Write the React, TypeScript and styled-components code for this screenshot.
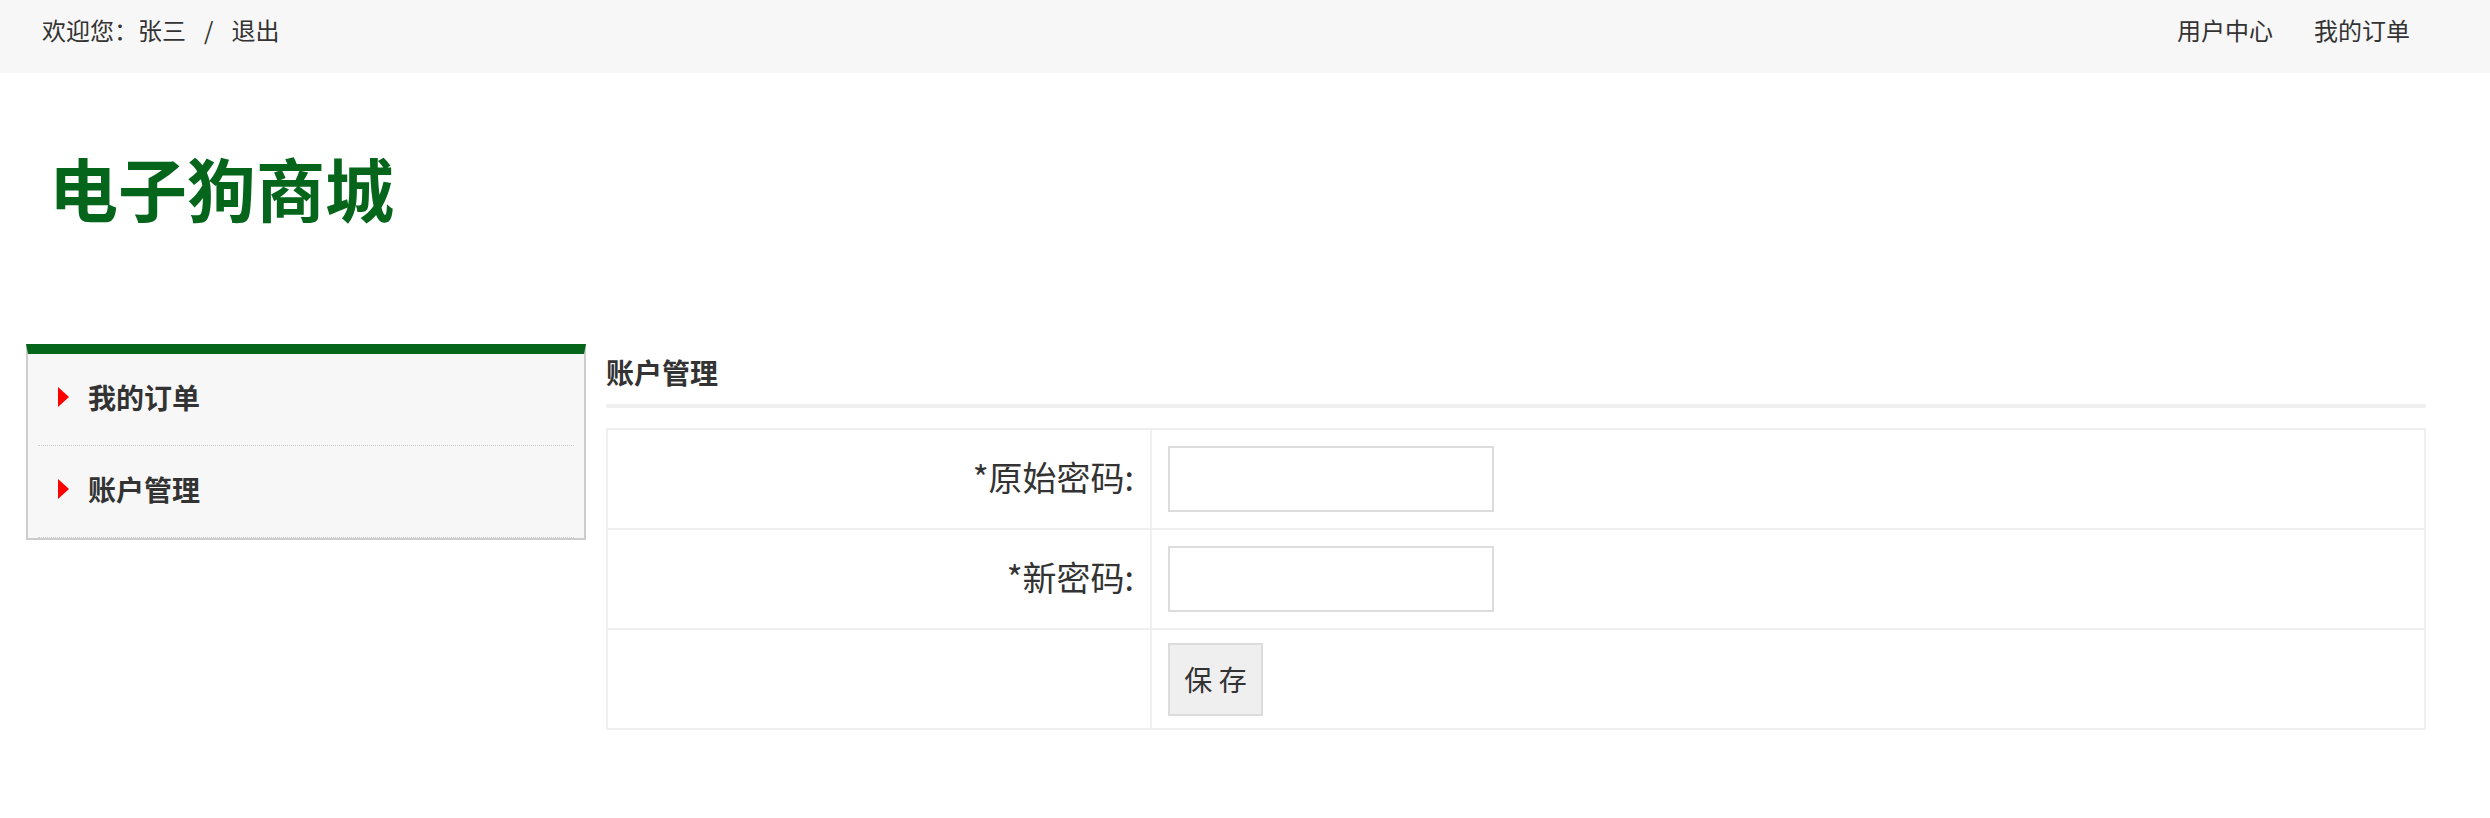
import React from "react";
import styled, { createGlobalStyle } from "styled-components";

const GlobalStyle = createGlobalStyle`
  html, body {
    margin: 0;
    padding: 0;
    background: #ffffff;
  }
  body {
    font-family: "Noto Sans CJK SC", "Noto Sans", sans-serif;
    color: #333333;
  }
  * {
    box-sizing: border-box;
  }
`;

const GREEN = "#05651b";

const TopBar = styled.div`
  display: flex;
  justify-content: space-between;
  align-items: flex-start;
  height: 73px;
  padding: 10px 80px 0 42px;
  background: #f7f7f7;
  font-size: 24px;
  line-height: 40px;
  color: #333333;
`;

const Welcome = styled.div`
  display: flex;
  white-space: pre;
`;

const Link = styled.a`
  color: #333333;
  text-decoration: none;
  cursor: pointer;
`;

const Sep = styled.span`
  margin: 0 18px;
`;

const NavLinks = styled.nav`
  display: flex;
  gap: 41px;
`;

const Header = styled.header`
  padding: 64px 0 0 49px;
`;

const Logo = styled.h1`
  margin: 0;
  font-size: 69px;
  line-height: 101px;
  font-weight: bold;
  color: ${GREEN};
`;

const Body = styled.div`
  display: flex;
  align-items: flex-start;
  gap: 20px;
  margin-top: 106px;
  padding-left: 26px;
`;

const Sidebar = styled.aside`
  width: 560px;
  border: 2px solid #cccccc;
  border-top: 10px solid ${GREEN};
  background: #f7f7f7;
  padding: 0 10px;
`;

const MenuItem = styled.div`
  display: flex;
  align-items: center;
  gap: 19px;
  height: 92px;
  padding: 0 0 6px 20px;
  border-bottom: 1px dotted #cfcfcf;
  font-size: 28px;
  font-weight: bold;
  color: #333333;
  cursor: pointer;
`;

const Arrow = styled.span`
  display: block;
  width: 0;
  height: 0;
  border-left: 11px solid #ff0000;
  border-top: 10px solid transparent;
  border-bottom: 10px solid transparent;
`;

const Main = styled.main`
  width: 1820px;
`;

const Heading = styled.h2`
  margin: 0;
  padding: 8px 0 12px;
  font-size: 28px;
  line-height: 40px;
  font-weight: bold;
  color: #333333;
  border-bottom: 4px solid #f0f0f0;
`;

const FormGrid = styled.form`
  margin: 20px 0 0;
  display: grid;
  grid-template-columns: 544px 1fr;
  border-top: 2px solid #efefef;
  border-left: 2px solid #efefef;
`;

const Cell = styled.div<{ $label?: boolean }>`
  display: flex;
  align-items: center;
  justify-content: ${(p) => (p.$label ? "flex-end" : "flex-start")};
  height: 100px;
  padding: ${(p) => (p.$label ? "0 16px 6px" : "0 16px")};
  border-right: 2px solid #efefef;
  border-bottom: 2px solid #efefef;
  font-size: 34px;
  color: #333333;
`;

const Input = styled.input`
  width: 326px;
  height: 66px;
  border: 2px solid #dcdcdc;
  background: #ffffff;
  outline: none;
  font-size: 24px;
  padding: 0 8px;
`;

const SaveButton = styled.button`
  width: 95px;
  height: 73px;
  padding: 0;
  border: 2px solid #dcdcdc;
  background: #efefef;
  font-family: inherit;
  font-size: 28px;
  color: #333333;
  cursor: pointer;
`;

export default function App() {
  return (
    <>
      <GlobalStyle />
      <TopBar>
        <Welcome>
          <span>欢迎您：</span>
          <Link>张三</Link>
          <Sep>/</Sep>
          <Link>退出</Link>
        </Welcome>
        <NavLinks>
          <Link>用户中心</Link>
          <Link>我的订单</Link>
        </NavLinks>
      </TopBar>
      <Header>
        <Logo>电子狗商城</Logo>
      </Header>
      <Body>
        <Sidebar>
          <MenuItem>
            <Arrow />
            <span>我的订单</span>
          </MenuItem>
          <MenuItem>
            <Arrow />
            <span>账户管理</span>
          </MenuItem>
        </Sidebar>
        <Main>
          <Heading>账户管理</Heading>
          <FormGrid onSubmit={(e) => e.preventDefault()}>
            <Cell $label>*原始密码:</Cell>
            <Cell>
              <Input type="password" />
            </Cell>
            <Cell $label>*新密码:</Cell>
            <Cell>
              <Input type="password" />
            </Cell>
            <Cell $label />
            <Cell>
              <SaveButton type="submit">保 存</SaveButton>
            </Cell>
          </FormGrid>
        </Main>
      </Body>
    </>
  );
}
